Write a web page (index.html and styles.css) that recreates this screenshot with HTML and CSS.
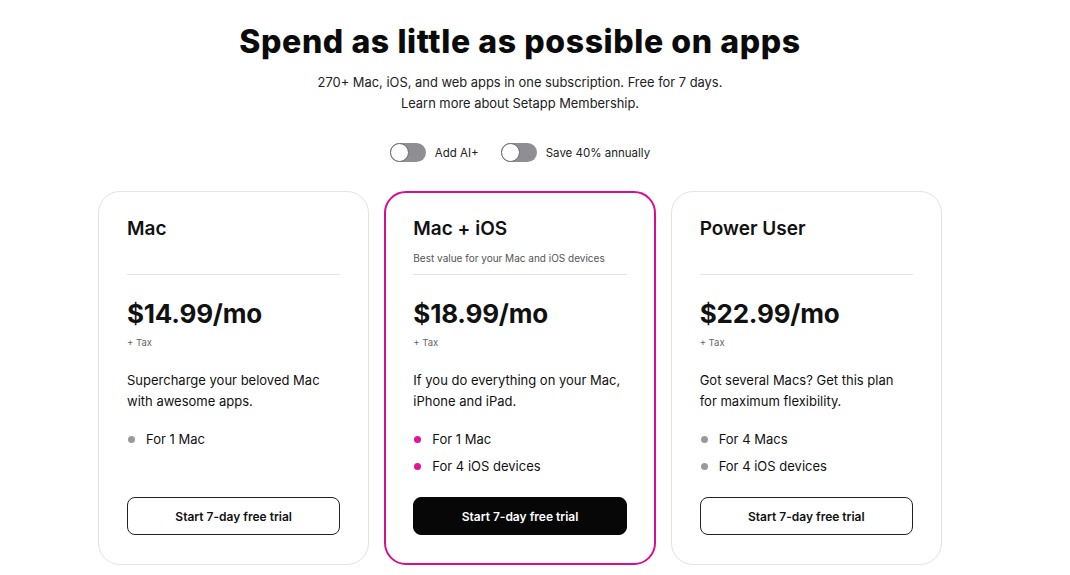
FILE: index.html
```html
<!DOCTYPE html>
<html lang="en">

<head>
    <meta charset="UTF-8">
    <meta name="viewport" content="width=device-width, initial-scale=1.0">
    <title>Setapp Pricing</title>
    <link rel="stylesheet" href="styles.css">
</head>

<body>

    <div class="page">
        <header class="intro">
            <h1>Spend as little as possible on apps</h1>
            <p>270+ Mac, iOS, and web apps in one subscription. Free for 7 days.<br>
                Learn more about Setapp Membership.</p>
        </header>

        <div class="switches">
            <label class="switch">
                <span class="track"><span class="knob"></span></span>
                Add AI+
            </label>
            <label class="switch">
                <span class="track"><span class="knob"></span></span>
                Save 40% annually
            </label>
        </div>

        <div class="plans">
            <div class="card">
                <h3>Mac</h3>
                <p class="tagline"></p>
                <div class="price">$14.99/mo</div>
                <div class="tax">+ Tax</div>
                <p class="desc">Supercharge your beloved Mac with awesome apps.</p>
                <ul class="features">
                    <li>For 1 Mac</li>
                </ul>
                <button class="trial">Start 7-day free trial</button>
            </div>

            <div class="card featured">
                <h3>Mac + iOS</h3>
                <p class="tagline">Best value for your Mac and iOS devices</p>
                <div class="price">$18.99/mo</div>
                <div class="tax">+ Tax</div>
                <p class="desc">If you do everything on your Mac, iPhone and iPad.</p>
                <ul class="features">
                    <li>For 1 Mac</li>
                    <li>For 4 iOS devices</li>
                </ul>
                <button class="trial">Start 7-day free trial</button>
            </div>

            <div class="card">
                <h3>Power User</h3>
                <p class="tagline"></p>
                <div class="price">$22.99/mo</div>
                <div class="tax">+ Tax</div>
                <p class="desc">Got several Macs? Get this plan for maximum flexibility.</p>
                <ul class="features">
                    <li>For 4 Macs</li>
                    <li>For 4 iOS devices</li>
                </ul>
                <button class="trial">Start 7-day free trial</button>
            </div>
        </div>
    </div>

</body>

</html>
```

FILE: styles.css
```css
body {
    font-family: Inter, "Noto Sans", sans-serif;
    margin: 0;
    padding: 0 30px 0 0;
    background-color: #fff;
    color: #111;
}

.page {
    width: 844px;
    margin: 0 auto;
}

.intro {
    text-align: center;
}

.intro h1 {
    margin: 0;
    padding-top: 23px;
    font-size: 32px;
    line-height: 38px;
    font-weight: 800;
    letter-spacing: 0.6px;
    color: #0b0b0b;
}

.intro p {
    margin: 11px 0 0;
    font-size: 12.9px;
    line-height: 21px;
    color: #222;
}

.switches {
    display: flex;
    justify-content: center;
    gap: 22px;
    margin-top: 29px;
}

.switch {
    display: flex;
    align-items: center;
    gap: 9px;
    font-size: 11.5px;
    color: #222;
}

.track {
    width: 36px;
    height: 19px;
    border-radius: 10px;
    background-color: #8e8e93;
    display: flex;
    align-items: center;
}

.knob {
    width: 19px;
    height: 19px;
    border-radius: 50%;
    background-color: #fff;
    box-sizing: border-box;
    border: 1px solid #6d6d72;
}

.plans {
    display: grid;
    grid-template-columns: repeat(3, 1fr);
    gap: 15px;
    margin-top: 29px;
}

.card {
    display: flex;
    flex-direction: column;
    border: 1px solid #e3e3e3;
    border-radius: 22px;
    padding: 25px 28px 29px;
}

.card.featured {
    border: 2px solid #d80e8f;
    padding: 24px 27px 28px;
}

.card h3 {
    margin: 0;
    font-size: 19px;
    line-height: 24px;
    font-weight: 600;
}

.tagline {
    margin: 9px 0 0;
    min-height: 16px;
    padding-bottom: 8px;
    border-bottom: 1px solid #e2e2e2;
    font-size: 10px;
    line-height: 16px;
    color: #555;
}

.price {
    margin-top: 23px;
    font-size: 26px;
    line-height: 32px;
    font-weight: 700;
    letter-spacing: -0.2px;
}

.tax {
    margin-top: 6px;
    font-size: 9.5px;
    line-height: 14px;
    color: #666;
}

.desc {
    margin: 20px 0 0;
    font-size: 13px;
    line-height: 21px;
    color: #111;
}

.features {
    list-style: none;
    margin: 14px 0 17px;
    padding: 0;
}

.features li {
    position: relative;
    padding-left: 19px;
    font-size: 13px;
    line-height: 27px;
}

.features li::before {
    content: "";
    position: absolute;
    left: 1px;
    top: 10px;
    width: 7px;
    height: 7px;
    border-radius: 50%;
    background-color: #999;
}

.featured .features li::before {
    background-color: #e3119b;
}

.trial {
    margin-top: auto;
    height: 38px;
    border: 1px solid #222;
    border-radius: 8px;
    background-color: #fff;
    font-family: inherit;
    font-size: 12px;
    font-weight: 600;
    color: #111;
    cursor: pointer;
}

.featured .trial {
    background-color: #070707;
    border-color: #070707;
    color: #fff;
}
```
